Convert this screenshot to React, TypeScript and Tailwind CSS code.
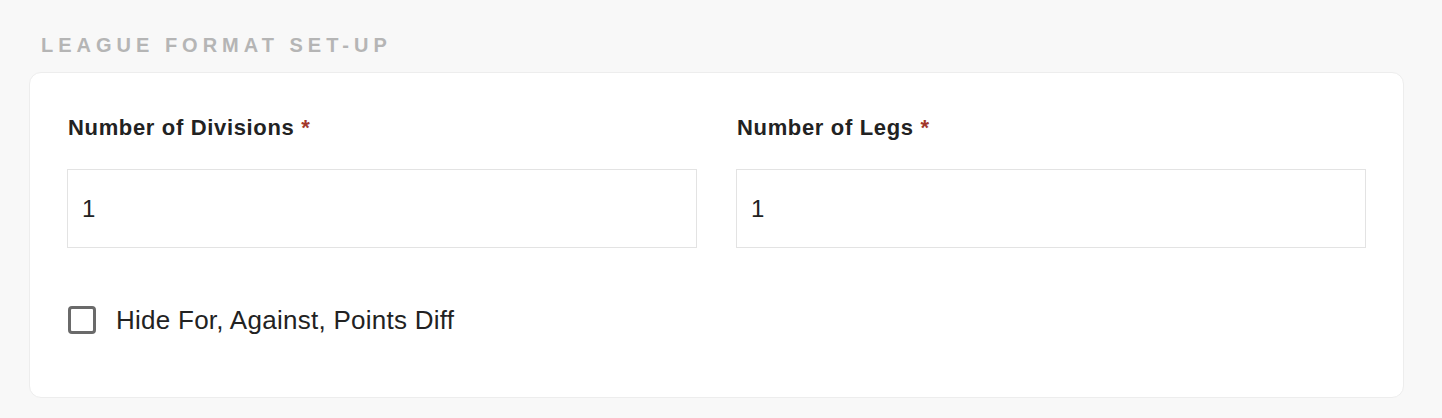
import { useState } from 'react';

export default function App() {
    const [divisions, setDivisions] = useState('1');
    const [legs, setLegs] = useState('1');
    const [hideDiff, setHideDiff] = useState(false);

    return (
        <div className="min-h-[418px] bg-[#f8f8f8] pl-[29px] pr-[38px] pt-[33px] font-['Liberation_Sans',Arial,sans-serif]">
            <h3 className="mb-[15px] pl-[12px] text-[20px] leading-[24px] font-bold tracking-[0.25em] text-[#b5b5b5]">
                LEAGUE FORMAT SET-UP
            </h3>

            <div className="rounded-[12px] border border-[#ededed] bg-white px-[37px] pt-[41px] pb-[61px]">
                <div className="grid grid-cols-2 gap-x-[39px]">
                    <Field label="Number of Divisions" value={divisions} onChange={setDivisions} />
                    <Field label="Number of Legs" value={legs} onChange={setLegs} />
                </div>

                {/* checkbox row */}
                <label className="mt-[56px] flex cursor-pointer items-center gap-[20px] pl-[1px]">
                    <input
                        type="checkbox"
                        checked={hideDiff}
                        onChange={(e) => setHideDiff(e.target.checked)}
                        className="peer sr-only"
                    />
                    <span className="h-[28px] w-[28px] rounded-[4px] border-[3px] border-[#6a6a6a] bg-white" />
                    <span className="text-[26px] leading-[32px] tracking-[0.01em] text-[#222]">Hide For, Against, Points Diff</span>
                </label>
            </div>
        </div>
    );
}

interface FieldProps {
    label: string;
    value: string;
    onChange: (v: string) => void;
}

function Field({ label, value, onChange }: FieldProps) {
    return (
        <div className="flex flex-col">
            <label className="mb-[27px] pl-[1px] text-[22px] leading-[28px] font-bold tracking-[0.03em] text-[#222]">
                {label} <span className="text-[#a3372b]">*</span>
            </label>
            <input
                type="text"
                value={value}
                onChange={(e) => onChange(e.target.value)}
                className="h-[79px] w-full border border-[#e3e3e3] bg-white px-[14px] text-[24px] text-[#222] outline-none"
            />
        </div>
    );
}
